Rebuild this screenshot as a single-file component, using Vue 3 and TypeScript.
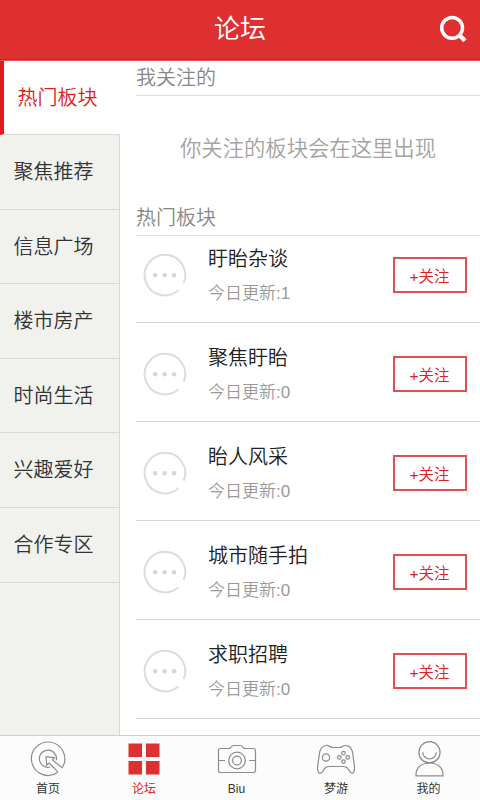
<script setup lang="ts">
interface Board {
  name: string
  updates: number
}

const categories: string[] = ['热门板块', '聚焦推荐', '信息广场', '楼市房产', '时尚生活', '兴趣爱好', '合作专区']

const boards: Board[] = [
  { name: '盱眙杂谈', updates: 1 },
  { name: '聚焦盱眙', updates: 0 },
  { name: '眙人风采', updates: 0 },
  { name: '城市随手拍', updates: 0 },
  { name: '求职招聘', updates: 0 },
]
</script>

<template>
  <div class="screen">
    <header class="header">
      <span></span>
      <h1 class="title">论坛</h1>
      <svg class="search" viewBox="0 0 28 28" fill="none" stroke="#fff">
        <circle cx="13.1" cy="12.8" r="10.4" stroke-width="3.5" />
        <path d="M19.500 19.200l6.500 6.500" stroke-width="4.200" />
      </svg>
    </header>

    <div class="body">
      <nav class="sidebar">
        <div v-for="(c, i) in categories" :key="c" class="category" :class="{ active: i === 0 }">{{ c }}</div>
        <div class="sidebar-rest"></div>
      </nav>

      <main class="content">
        <h2 class="section followed">我关注的</h2>
        <p class="empty">你关注的板块会在这里出现</p>
        <h2 class="section hot">热门板块</h2>
        <div v-for="b in boards" :key="b.name" class="board">
          <svg class="avatar" viewBox="0 0 44 44">
            <path d="M35.400 37.300A20.300 20.300 0 1 1 40.700 29.900" fill="none" stroke="#dcdcdc" stroke-width="2" />
            <g fill="#d6d6d6">
              <circle cx="12.200" cy="22.200" r="2.300" />
              <circle cx="21.600" cy="22.200" r="2.300" />
              <circle cx="31" cy="22.200" r="2.300" />
            </g>
          </svg>
          <div class="info">
            <div class="name">{{ b.name }}</div>
            <div class="updates">今日更新:{{ b.updates }}</div>
          </div>
          <button class="follow">+关注</button>
        </div>
      </main>
    </div>

    <footer class="tabs">
      <div class="tab">
        <svg class="icon" viewBox="0 0 40 36" fill="none" stroke="#8c8c8c" stroke-width="1.200">
          <path d="M30 31.200A16.700 16.700 0 1 1 34.200 26.700L24.500 19L26.500 16.800L18 15.700L18.800 24L21.300 22L30 31.200" />
          <path d="M22 26A8.600 8.600 0 1 1 28.400 19.200" />
        </svg>
        <span>首页</span>
      </div>
      <div class="tab on">
        <svg class="icon" viewBox="0 0 40 36" fill="#de3031">
          <path d="M4.500 2.500h13.500v13.500h-13.500zM22 2.500h13.500v13.500h-13.500zM4.500 20h13.500v13.500h-13.500zM22 20h13.500v13.500h-13.500z" />
        </svg>
        <span>论坛</span>
      </div>
      <div class="tab">
        <svg class="icon" viewBox="0 0 40 36" fill="none" stroke="#8c8c8c" stroke-width="1.200">
          <path d="M3.500 7.500H12Q13.500 7.500 14.200 6Q15 4.500 16.800 4.500H23.200Q25 4.500 25.800 6Q26.500 7.500 28 7.500H36.500Q38.500 7.500 38.500 9.500V29.500Q38.500 31.500 36.500 31.500H3.500Q1.500 31.500 1.500 29.500V9.500Q1.500 7.500 3.500 7.500Z" />
          <circle cx="20" cy="19.500" r="8.300" />
          <circle cx="20" cy="19.500" r="4.400" />
          <path d="M2 19.500h6M32 19.500h6" />
        </svg>
        <span>Biu</span>
      </div>
      <div class="tab">
        <svg class="icon" viewBox="0 0 40 36" fill="none" stroke="#8c8c8c" stroke-width="1.200">
          <path d="M10 4.500Q12 4 14 5.500Q15 6.500 17 6.500H23.500Q25.500 6.500 26.500 5.500Q28.500 4 31 4.800Q35 5 36.500 11L38.300 24Q39 32.300 36.500 32.300Q34.500 32.300 32.500 28.500Q31 25.500 27 25.500H13Q9.500 25.500 8 28.500Q6 32.300 3.800 32.300Q1 32.300 1.800 24L3.700 11Q5 5 10 4.500Z" />
          <circle cx="10" cy="16.500" r="3.600" />
          <circle cx="27.500" cy="12.200" r="1.800" />
          <circle cx="27.500" cy="20.600" r="1.800" />
          <circle cx="23.300" cy="16.400" r="1.800" />
          <circle cx="31.700" cy="16.400" r="1.800" />
        </svg>
        <span>梦游</span>
      </div>
      <div class="tab">
        <svg class="icon" viewBox="0 0 40 36" fill="none" stroke="#8c8c8c" stroke-width="1.200">
          <circle cx="20.500" cy="11.300" r="10.600" />
          <path d="M13.800 11.300A6.700 6.700 0 0 0 27.200 11.300" />
          <path d="M7 34.800C6.500 27 12 22 20.500 22S34.500 27 34 34.800Z" />
        </svg>
        <span>我的</span>
      </div>
    </footer>
  </div>
</template>

<style>
body {
  margin: 0;
  overflow: hidden;
}
</style>

<style scoped>
.screen {
  width: 480px;
  height: 800px;
  display: flex;
  flex-direction: column;
  background: #fff;
  font-family: "Liberation Sans", "Noto Sans CJK SC", sans-serif;
  font-weight: 350;
}
.header {
  box-sizing: border-box;
  height: 61px;
  flex: none;
  display: grid;
  grid-template-columns: 1fr auto 1fr;
  align-items: center;
  padding: 0 13px 2px;
  background: #de3031;
  border-bottom: 1px solid #e9595b;
  box-shadow: inset 0 -1px #d5191d;
  color: #fff;
}
.title {
  margin: 0;
  font-size: 26px;
  line-height: 36px;
  font-weight: 350;
}
.search {
  width: 28px;
  height: 28px;
  justify-self: end;
}
.body {
  flex: 1;
  min-height: 0;
  display: flex;
}
.sidebar {
  width: 120px;
  flex: none;
  display: flex;
  flex-direction: column;
}
.category {
  box-sizing: border-box;
  height: 74.6px;
  flex: none;
  padding-left: 13.5px;
  line-height: 74px;
  font-size: 20px;
  color: #333;
  background: #f1f2ed;
  border-right: 1px solid #d8d9d5;
  border-bottom: 1px solid #d8d9d5;
}
.category.active {
  height: 74px;
  padding-left: 13.5px;
  line-height: 75px;
  border-left: 4px solid #e6191e;
  border-right: 0;
  background: #fff;
  color: #e01c20;
}
.sidebar-rest {
  flex: 1;
  background: #f1f2ed;
  border-right: 1px solid #d8d9d5;
}
.content {
  flex: 1;
  min-width: 0;
  padding-left: 16px;
  overflow: hidden;
}
.section {
  box-sizing: border-box;
  margin: 0;
  font-size: 20px;
  font-weight: 350;
  color: #888;
  border-bottom: 1px solid #ddd;
}
.followed {
  height: 35px;
  line-height: 35px;
}
.hot {
  height: 37px;
  line-height: 39px;
}
.empty {
  margin: 0;
  height: 103px;
  line-height: 107px;
  font-size: 21.33px;
  text-align: center;
  color: #a3a3a3;
}
.board {
  box-sizing: border-box;
  height: 99px;
  display: flex;
  align-items: center;
  padding: 4px 13px 0 7px;
  border-bottom: 1px solid #d8d8d8;
}
.hot + .board {
  height: 87px;
  padding-top: 0;
  padding-bottom: 8px;
}
.avatar {
  width: 44px;
  height: 44px;
  flex: none;
}
.info {
  flex: 1;
  padding-top: 3px;
  padding-left: 21px;
}
.name {
  font-size: 20px;
  line-height: 34px;
  color: #222;
}
.updates {
  font-size: 17px;
  line-height: 35px;
  color: #999;
}
.follow {
  box-sizing: border-box;
  width: 74px;
  height: 36px;
  padding: 0 1px 1px 0;
  background: #fff;
  border: 2px solid #e34f50;
  color: #dc2024;
  font: inherit;
  font-size: 15.500px;
}
.tabs {
  box-sizing: border-box;
  height: 65px;
  flex: none;
  display: grid;
  grid-template-columns: 96px 96px 89px 110px 75px;
  padding-top: 5px;
  background: #fcfcfc;
  border-top: 1px solid #cfcfcf;
}
.tab {
  display: flex;
  flex-direction: column;
  align-items: center;
  gap: 3px;
  font-size: 12px;
  line-height: 18px;
  color: #333;
  font-weight: 400;
}
.tab.on {
  color: #dd2225;
}
.icon {
  width: 40px;
  height: 36px;
  flex: none;
}
</style>
